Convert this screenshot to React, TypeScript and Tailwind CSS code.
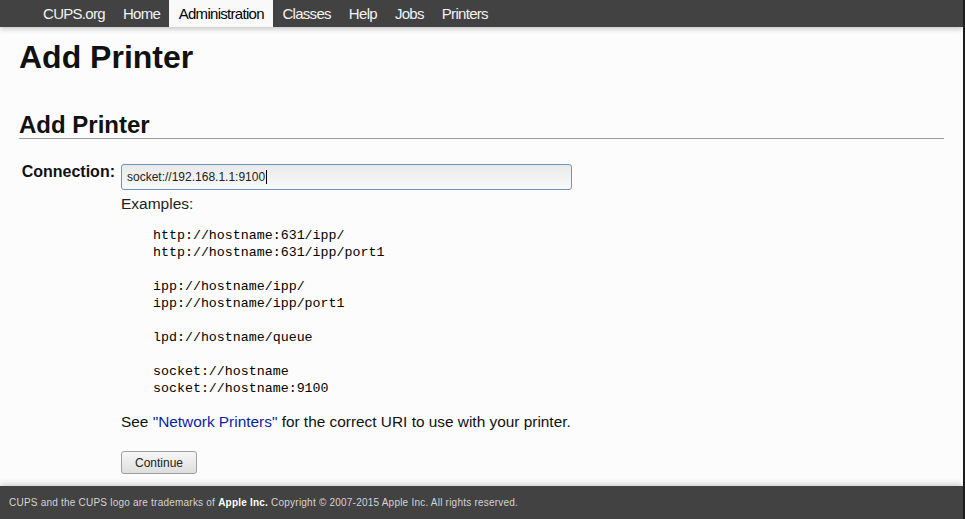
import React from 'react';

const navItems = ['CUPS.org', 'Home', 'Administration', 'Classes', 'Help', 'Jobs', 'Printers'];

const examples = [
  'http://hostname:631/ipp/',
  'http://hostname:631/ipp/port1',
  '',
  'ipp://hostname/ipp/',
  'ipp://hostname/ipp/port1',
  '',
  'lpd://hostname/queue',
  '',
  'socket://hostname',
  'socket://hostname:9100',
];

const App: React.FC = () => {
  return (
    <div className="flex h-[519px] w-[965px] flex-col overflow-hidden border-r-2 border-[#1c1c1c] bg-[#fcfcfc] font-['Liberation_Sans',Arial,sans-serif] text-[#111]">
      {/* top navigation */}
      <header className="relative z-10 flex h-[27px] shrink-0 bg-[#424242] pl-[34px] shadow-[0_2px_5px_rgba(0,0,0,0.22)]">
        {navItems.map((item) => (
          <a
            key={item}
            className={
              item === 'Administration'
                ? 'flex h-full items-center bg-[#f9f9f9] px-[9.5px] pt-px text-[15px] tracking-[-0.7px] text-black'
                : 'flex h-full items-center px-[9px] pt-px text-[15px] tracking-[-0.7px] text-[#f2f2f2]'
            }
          >
            {item}
          </a>
        ))}
      </header>

      <main className="flex-1 px-[19px]">
        <h1 className="mt-[14px] text-[32px] font-bold leading-none">Add Printer</h1>
        <h2 className="mt-[40px] border-b border-[#9a9a9a] pb-[1px] text-[24px] font-bold leading-none">Add Printer</h2>

        <form className="mt-[25px] flex items-start">
          <label className="mt-[-1px] w-[97px] pr-px text-right text-[16px] font-bold leading-[18px]">Connection:</label>
          <div className="ml-[5px] flex flex-col">
            <div className="flex h-[26px] w-[451px] items-center rounded-[3px] border border-[#6f93bd] bg-gradient-to-b from-[#e9e9e9] to-[#fafafa] px-[5px] text-[12px] text-[#222]">
              socket://192.168.1.1:9100
              <span className="ml-px h-[14px] w-px bg-black" />
            </div>
            <p className="mt-[5px] text-[15.5px] leading-[17px] text-[#222]">Examples:</p>
            <pre className="mt-[15px] pl-[32px] font-['Liberation_Mono','Courier_New',monospace] text-[13.3px] leading-[17px] text-black">
              {examples.map((line, i) => (
                <div key={i} className="h-[17px]">
                  {line}
                </div>
              ))}
            </pre>
            <p className="mt-[16px] text-[15.4px] leading-[18px]">
              See <a className="text-[#0a1fa6]">"Network Printers"</a> for the correct URI to use with your printer.
            </p>
            <button
              type="button"
              className="mt-[20px] h-[23px] w-[76px] rounded-[3px] border border-[#9f9f9f] bg-gradient-to-b from-[#f7f7f7] to-[#dedede] text-[12px] text-[#222]"
            >
              Continue
            </button>
          </div>
        </form>
      </main>

      {/* footer */}
      <footer className="flex h-[33px] shrink-0 items-center bg-[#424242] pl-[9px] text-[10px] tracking-[0.22px] text-[#d4d4d4] shadow-[0_-2px_6px_rgba(0,0,0,0.18)]">
        <span>
          CUPS and the CUPS logo are trademarks of <span className="font-bold text-white">Apple Inc.</span> Copyright © 2007-2015 Apple Inc. All rights reserved.
        </span>
      </footer>
    </div>
  );
};

export default App;
